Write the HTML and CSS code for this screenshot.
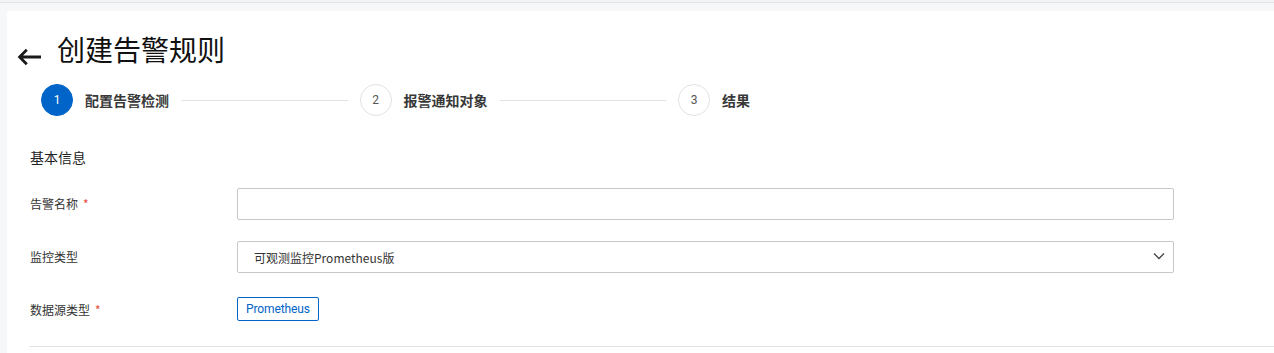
FILE: index.html
```html
<!DOCTYPE html>
<html lang="zh-CN">
<head>
<meta charset="utf-8">
<title>创建告警规则</title>
<link rel="stylesheet" href="styles.css">
</head>
<body>
<div class="topline"></div>
<div class="card">
  <div class="header">
    <svg class="back" width="25" height="18" viewBox="0 0 25 18">
      <path d="M24 9H2.8M9.8 1.8L2.6 9l7.2 7.2" fill="none" stroke="#1a1a1a" stroke-width="2.8" stroke-linecap="butt" stroke-linejoin="miter"/>
    </svg>
    <h1 class="title">创建告警规则</h1>
  </div>
  <div class="steps">
    <div class="step">
      <span class="dot active">1</span>
      <span class="step-text">配置告警检测</span>
      <span class="step-line"></span>
    </div>
    <div class="step">
      <span class="dot">2</span>
      <span class="step-text">报警通知对象</span>
      <span class="step-line"></span>
    </div>
    <div class="step last">
      <span class="dot">3</span>
      <span class="step-text">结果</span>
    </div>
  </div>
  <div class="form">
    <div class="section-title">基本信息</div>
    <div class="row">
      <div class="label">告警名称<span class="req">*</span></div>
      <div class="control"><div class="input"></div></div>
    </div>
    <div class="row">
      <div class="label">监控类型</div>
      <div class="control">
        <div class="input select">
          <span class="select-value">可观测监控Prometheus版</span>
          <svg class="chev" width="12" height="8" viewBox="0 0 12 8"><path d="M1 1.5l5 5 5-5" fill="none" stroke="#444" stroke-width="1.3"/></svg>
        </div>
      </div>
    </div>
    <div class="row">
      <div class="label">数据源类型<span class="req">*</span></div>
      <div class="control"><span class="tag">Prometheus</span></div>
    </div>
    <div class="divider"></div>
  </div>
</div>
</body>
</html>
```

FILE: styles.css
```css
* { box-sizing: border-box; }
html, body { margin: 0; padding: 0; }
body {
  background: #f6f7f9;
  font-family: "Noto Sans CJK SC", "Noto Sans", sans-serif;
  color: #333;
  height: 353px;
  overflow: hidden;
}
.topline {
  height: 3px;
  border-bottom: 1px solid #e4e4e4;
  background: #f3f4f6;
}
.card {
  background: #fff;
  margin: 8px 0 0 7px;
  padding-top: 18px;
  height: 342px;
  overflow: hidden;
}
.header {
  display: flex;
  align-items: flex-start;
  padding-left: 10px;
  height: 40px;
}
.back { margin-top: 19px; margin-right: 15px; }
.title {
  margin: 0;
  font-size: 28px;
  line-height: 40px;
  font-weight: 400;
  color: #111;
}
.steps {
  display: flex;
  align-items: center;
  margin: 15px 0 0 34px;
  height: 32px;
}
.step { display: flex; align-items: center; width: 318.5px; }
.step.last { width: auto; }
.dot {
  width: 32px; height: 32px;
  border-radius: 50%;
  border: 1px solid #e3e3e3;
  display: flex; align-items: center; justify-content: center;
  font-family: Roboto, "Noto Sans", sans-serif;
  font-size: 12px;
  color: #555;
  flex: none;
}
.dot.active { background: #0064c8; border-color: #0064c8; color: #fff; }
.step-text {
  margin-left: 12px;
  font-size: 14px;
  font-weight: 700;
  color: #383838;
  white-space: nowrap;
}
.step-line {
  flex: 1;
  height: 1px;
  background: #e3e3e3;
  margin: 0 12px;
}
.form { padding-left: 23px; }
.section-title {
  margin-top: 30px;
  font-size: 14px;
  line-height: 22px;
  color: #222;
}
.row {
  display: flex;
  margin-top: 20px;
}
.row + .row { margin-top: 21px; }
.row:last-of-type { margin-top: 20px; }
.label {
  width: 207px;
  flex: none;
  font-size: 12px;
  line-height: 32px;
  color: #333;
}
.req { color: #e84738; margin-left: 5px; }
.control { flex: none; width: 937px; }
.input {
  height: 32px;
  border: 1px solid #c8c8c8;
  border-radius: 2px;
  background: #fff;
}
.select {
  display: flex;
  align-items: center;
  justify-content: space-between;
  padding: 0 8px 0 16px;
}
.select-value {
  font-family: "Noto Sans CJK SC", sans-serif;
  font-size: 12px;
  color: #333;
}
.chev { margin-bottom: 2px; }
.tag {
  display: inline-flex;
  align-items: center;
  height: 24px;
  padding: 0 8px;
  border: 1px solid #0064c8;
  border-radius: 2px;
  color: #0064c8;
  font-family: Roboto, "Noto Sans", sans-serif;
  font-size: 12px;
  letter-spacing: -0.1px;
}
.divider {
  margin-top: 20px;
  height: 1px;
  background: #e3e3e3;
  margin-left: -1px;
}
```
